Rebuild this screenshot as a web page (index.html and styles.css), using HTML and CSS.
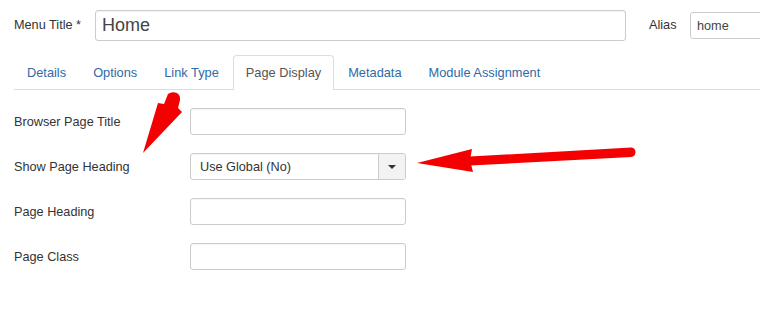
FILE: index.html
```html
<!DOCTYPE html>
<html>
<head>
<meta charset="utf-8">
<link rel="stylesheet" href="styles.css">
</head>
<body>
<div class="page">
  <div class="title-row">
    <label class="title-label">Menu Title *</label>
    <div class="title-input">Home</div>
    <label class="alias-label">Alias</label>
    <div class="alias-input">home</div>
  </div>
  <ul class="tabs">
    <li class="tab">Details</li>
    <li class="tab">Options</li>
    <li class="tab">Link Type</li>
    <li class="tab active">Page Display</li>
    <li class="tab">Metadata</li>
    <li class="tab">Module Assignment</li>
  </ul>
  <div class="form">
    <div class="row">
      <label class="lbl">Browser Page Title</label>
      <div class="field"></div>
    </div>
    <div class="row">
      <label class="lbl">Show Page Heading</label>
      <div class="field select">
        <span class="sel-text">Use Global (No)</span>
        <span class="sel-btn"><span class="caret"></span></span>
      </div>
    </div>
    <div class="row">
      <label class="lbl">Page Heading</label>
      <div class="field"></div>
    </div>
    <div class="row">
      <label class="lbl">Page Class</label>
      <div class="field"></div>
    </div>
  </div>
  <svg class="annot" width="760" height="309" viewBox="0 0 760 309">
    <path d="M168 94 C174 90 181 93 180 100 L178 108 L182 112 L143 153 L158 103 L164 104 Z" fill="#f40000"/>
    <path d="M470 156.5 L631 147.5 C637 147 637 157 631 157 L470 165.5 Z" fill="#f40000"/>
    <path d="M417 163 L472 149 L470 160 L473 172 Z" fill="#f40000"/>
  </svg>
</div>
</body>
</html>
```

FILE: styles.css
```css
* { box-sizing: border-box; }
html, body { margin: 0; padding: 0; background: #fff; }
body {
  font-family: "Liberation Sans", Arial, Helvetica, sans-serif;
  color: #333;
  width: 760px;
  height: 309px;
  overflow: hidden;
}
.page { position: relative; width: 760px; height: 309px; }

.title-row {
  display: flex;
  align-items: center;
  padding: 10px 0 0 14px;
  height: 41px;
  white-space: nowrap;
}
.title-label { font-size: 12.7px; width: 81px; flex: none; color: #333; margin-top: -2px; }
.title-input {
  flex: none;
  width: 531px;
  height: 31px;
  border: 1px solid #ccc;
  border-radius: 3px;
  font-size: 18px;
  color: #444;
  padding: 0 6px;
  display: flex;
  align-items: center;
  box-shadow: inset 0 1px 1px rgba(0,0,0,0.05);
}
.alias-label { flex: none; font-size: 12.7px; margin-left: 23px; width: 41px; color: #333; margin-top: -2px; }
.alias-input {
  flex: none;
  width: 100px;
  height: 27px;
  border: 1px solid #ccc;
  border-radius: 3px;
  font-size: 12.7px;
  color: #444;
  padding: 0 6px;
  display: flex;
  align-items: center;
}

.tabs {
  list-style: none;
  margin: 14px 0 0 14px;
  padding: 0;
  display: flex;
  border-bottom: 1px solid #ddd;
  height: 35px;
}
.tab {
  font-size: 12.8px;
  color: #2f6aa8;
  padding: 0 12px;
  border: 1px solid transparent;
  border-bottom: none;
  margin-right: 1px;
  height: 35px;
  line-height: 33px;
  white-space: nowrap;
}
.tab.active {
  color: #555;
  border-color: #ddd;
  border-radius: 4px 4px 0 0;
  background: #fff;
  height: 35px;
  margin-bottom: -1px;
}

.form {
  padding: 18px 0 0 14px;
  display: flex;
  flex-direction: column;
  gap: 18px;
}
.row { display: flex; align-items: center; height: 27px; }
.lbl { width: 176px; font-size: 12.7px; color: #333; flex: none; }
.field {
  width: 216px;
  height: 27px;
  border: 1px solid #ccc;
  border-radius: 3px;
  background: #fff;
  box-shadow: inset 0 1px 1px rgba(0,0,0,0.04);
}
.select {
  display: flex;
  align-items: stretch;
  overflow: hidden;
  background: #fff;
}
.sel-text {
  flex: 1;
  font-size: 12.7px;
  color: #333;
  padding-left: 9px;
  display: flex;
  align-items: center;
}
.sel-btn {
  width: 27px;
  border-left: 1px solid #ccc;
  background: #f3f3f3;
  display: flex;
  align-items: center;
  justify-content: center;
}
.caret {
  width: 0; height: 0;
  border-left: 4px solid transparent;
  border-right: 4px solid transparent;
  border-top: 4px solid #333;
}

.annot { position: absolute; left: 0; top: 0; pointer-events: none; }
```
